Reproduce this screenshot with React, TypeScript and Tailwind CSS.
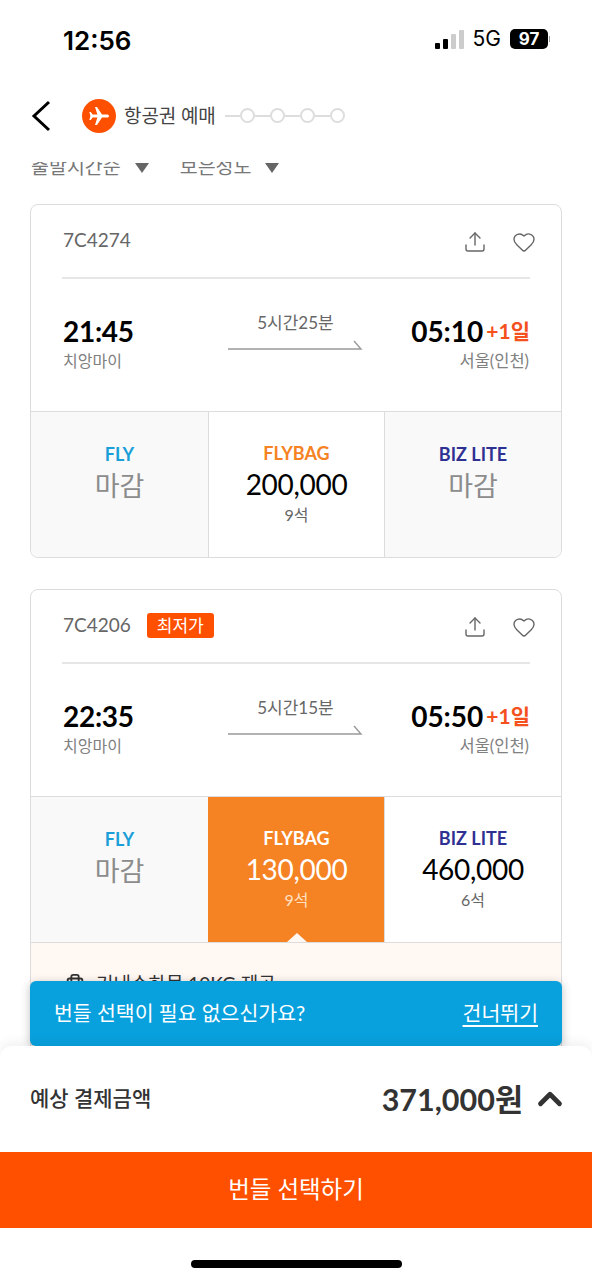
/**
 * Flight bundle selection screen.
 */

import { ChevronUp, Upload, Heart, Luggage } from 'lucide-react'

const FONT = 'font-[Lato,"Noto_Sans_CJK_KR",sans-serif]'

interface Fare {
  name: string
  nameColor: string
  price?: string
  seats?: string
  selected?: boolean
}

interface FlightCardProps {
  code: string
  lowest?: boolean
  depart: string
  arrive: string
  duration: string
  fares: Fare[]
  children?: React.ReactNode
}

function FareCell({ fare, divider }: { fare: Fare; divider: boolean }) {
  const closed = !fare.price
  return (
    <div
      className={`relative flex h-[145px] flex-col items-center ${divider ? 'border-l' : ''} ${
        fare.selected ? 'border-[#f58223] bg-[#f58223]' : closed ? 'border-[#dcdcdc] bg-[#f9f9f9]' : 'border-[#dcdcdc] bg-white'
      }`}
    >
      <div
        className={`text-[18px] leading-[24px] font-bold ${closed ? 'mt-[30px]' : 'mt-[29px]'}`}
        style={{ color: fare.selected ? '#ffffff' : fare.nameColor }}
      >
        {fare.name}
      </div>
      {closed ? (
        <div className="mt-[2px] text-[27px] leading-[36px] text-[#8c8c8c]">마감</div>
      ) : (
        <>
          <div className={`mt-[1px] text-[28px] leading-[36px] tracking-[-0.3px] ${fare.selected ? 'text-white' : 'text-black'}`}>
            {fare.price}
          </div>
          <div className={`mt-[3px] text-[16px] leading-[20px] ${fare.selected ? 'text-[#ffe0c4]' : 'text-[#666666]'}`}>
            {fare.seats}
          </div>
        </>
      )}
      {fare.selected && (
        <div className="absolute bottom-0 left-1/2 h-0 w-0 -translate-x-1/2 border-x-[10px] border-b-[9px] border-x-transparent border-b-[#fff8f3]" />
      )}
    </div>
  )
}

function FlightCard({ code, lowest, depart, arrive, duration, fares, children }: FlightCardProps) {
  return (
    <div className="mx-[30px] overflow-hidden rounded-[8px] border border-[#dcdcdc] bg-white">
      <div className="px-[31px]">
        <div className="flex h-[74px] justify-between border-b-2 border-[#e6e6e6] pt-[21px]">
          <div className="flex h-[28px] items-center gap-[16px] pl-[1px]">
            <span className="text-[19px] text-[#666666]">{code}</span>
            {lowest && (
              <span className="rounded-[3px] bg-[#ff5000] px-[10px] text-[17px] leading-[25px] text-white">최저가</span>
            )}
          </div>
          <div className="-mr-[6px] flex gap-[25px] pt-[4px] text-[#666666]">
            <Upload size={24} strokeWidth={1.4} />
            <Heart size={24} strokeWidth={1.4} />
          </div>
        </div>
        <div className="flex h-[132px] justify-between pt-[35px]">
          <div className="pl-[1px]">
            <div className="text-[28px] leading-[34px] font-bold tracking-[-0.3px] text-black">{depart}</div>
            <div className="mt-[3px] text-[16px] leading-[20px] text-[#808080]">치앙마이</div>
          </div>
          <div className="ml-[46px] flex flex-col items-center">
            <div className="-mt-[2px] text-[17px] leading-[22px] text-[#666666]">{duration}</div>
            <svg className="mt-[4px]" width="136" height="14" viewBox="0 0 136 14" fill="none" stroke="#999999" strokeWidth="1.4">
              <path d="M1 11H134L127 3" />
            </svg>
          </div>
          <div className="flex flex-col items-end">
            <div className="flex items-center gap-[3px] text-[28px] leading-[34px] font-bold text-black">
              {arrive}
              <span className="text-[21px] text-[#f4511e]">+1일</span>
            </div>
            <div className="mt-[3px] mr-[1px] text-[16.5px] leading-[20px] text-[#808080]">서울(인천)</div>
          </div>
        </div>
      </div>
      <div className="grid grid-cols-[177px_176px_1fr] border-t border-[#dcdcdc]">
        {fares.map((fare, i) => (
          <FareCell key={fare.name} fare={fare} divider={i > 0} />
        ))}
      </div>
      {children}
    </div>
  )
}

export default function App() {
  return (
    <div className={`relative flex h-[1280px] w-[592px] flex-col overflow-hidden bg-white ${FONT}`}>
      {/* status bar */}
      <div className="flex h-[78px] shrink-0 items-center justify-between pr-[42px] pl-[63px] font-['Inter',sans-serif]">
        <span className="mt-[2px] text-[26px] font-semibold text-black">12:56</span>
        <div className="flex items-center gap-[9px]">
          <div className="flex items-end gap-[3px]">
            <span className="h-[6px] w-[5px] rounded-[1px] bg-black" />
            <span className="h-[10px] w-[5px] rounded-[1px] bg-black" />
            <span className="h-[15px] w-[5px] rounded-[1px] bg-[#cccccc]" />
            <span className="h-[19px] w-[5px] rounded-[1px] bg-[#cccccc]" />
          </div>
          <span className="text-[21px] text-black">5G</span>
          <div className="flex items-center gap-[1px]">
            <span className="h-[20px] w-[38px] rounded-[5px] bg-black text-center text-[17px] leading-[20px] font-bold text-white">97</span>
            <span className="h-[6px] w-[1px] bg-[#999999]" />
          </div>
        </div>
      </div>

      {/* header */}
      <div className="flex h-[84px] shrink-0 items-start pl-[31px]">
        <svg className="mt-[22px]" width="20" height="32" viewBox="0 0 20 32" fill="none" stroke="black" strokeWidth="3">
          <path d="M18 2L3 16L18 30" />
        </svg>
        <div className="mt-[21px] ml-[31px] flex h-[34px] w-[34px] items-center justify-center rounded-full bg-[#ff5000]">
          <svg width="24" height="24" viewBox="0 0 24 24" fill="white">
            <path d="M22 12c0-1-1-1.6-2.4-1.6H15L10 3H8l2.4 7.4H5.6L3.8 8H2.4l1 4-1 4h1.4l1.8-2.4h4.8L8 21h2l5-7.4h4.6C21 13.6 22 13 22 12z" />
          </svg>
        </div>
        <span className="mt-[25px] ml-[8px] text-[19px] leading-[26px] tracking-[-0.1px] text-[#444444]">항공권 예매</span>
        <div className="mt-[30px] ml-[9px] flex items-center">
          {[0, 1, 2, 3].map((i) => (
            <div key={i} className="flex items-center">
              <span className="h-[2px] w-[15px] bg-[#dddddd]" />
              <span className="h-[15px] w-[15px] rounded-full border-2 border-[#dddddd]" />
            </div>
          ))}
        </div>
      </div>

      {/* scroll area, filter row is cut by the header */}
      <div className="min-h-0 flex-1 overflow-hidden">
        <div className="-mt-[7px] flex h-[49px] items-start pl-[31px] text-[19.5px] leading-[24px] text-[#777777]">
          <span>출발시간순</span>
          <span className="mt-[8px] ml-[14px] h-0 w-0 border-x-[7.5px] border-t-[10px] border-x-transparent border-t-[#666666]" />
          <span className="ml-[31px]">보은성도</span>
          <span className="mt-[8px] ml-[14px] h-0 w-0 border-x-[7.5px] border-t-[10px] border-x-transparent border-t-[#666666]" />
        </div>

        <div className="flex flex-col gap-[31px]">
          <FlightCard
            code="7C4274"
            depart="21:45"
            arrive="05:10"
            duration="5시간25분"
            fares={[
              { name: 'FLY', nameColor: '#1a9fd8' },
              { name: 'FLYBAG', nameColor: '#f58223', price: '200,000', seats: '9석' },
              { name: 'BIZ LITE', nameColor: '#2e3192' },
            ]}
          />
          <FlightCard
            code="7C4206"
            lowest
            depart="22:35"
            arrive="05:50"
            duration="5시간15분"
            fares={[
              { name: 'FLY', nameColor: '#1a9fd8' },
              { name: 'FLYBAG', nameColor: '#f58223', price: '130,000', seats: '9석', selected: true },
              { name: 'BIZ LITE', nameColor: '#2e3192', price: '460,000', seats: '6석' },
            ]}
          >
            <div className="h-[300px] border-t border-[#dcdcdc] bg-[#fff8f3] px-[33px] pt-[29px]">
              <div className="flex items-center gap-[10px] text-[19px] leading-[24px] text-[#333333]">
                <Luggage size={22} />
                기내수하물 10KG 제공
              </div>
            </div>
          </FlightCard>
        </div>
      </div>

      {/* skip banner */}
      <div className="absolute top-[981px] left-[30px] flex h-[65px] w-[532px] items-center justify-between rounded-[6px] bg-[#08a1de] pr-[24px] pl-[24px] text-[20.5px] text-white shadow-[0_2px_10px_rgba(0,0,0,0.25)]">
        <span>번들 선택이 필요 없으신가요?</span>
        <span className="underline underline-offset-[4px]">건너뛰기</span>
      </div>

      {/* bottom sheet */}
      <div className="absolute top-[1046px] left-0 flex h-[234px] w-[592px] flex-col rounded-t-[12px] bg-white shadow-[0_-4px_12px_rgba(0,0,0,0.06)]">
        <div className="flex h-[106px] items-start justify-between pr-[23px] pl-[30px]">
          <span className="mt-[38px] text-[21px] leading-[28px] font-medium text-[#333333]">예상 결제금액</span>
          <div className="mt-[31px] flex items-center gap-[8px]">
            <span className="text-[30.5px] leading-[44px] font-bold text-[#333333]">371,000원</span>
            <ChevronUp size={38} strokeWidth={3} className="text-[#333333]" />
          </div>
        </div>
        <div className="flex h-[76px] items-center justify-center bg-[#ff5000] text-[23.5px] text-white">번들 선택하기</div>
        <div className="flex flex-1 justify-center pt-[32px]">
          <span className="h-[8px] w-[211px] rounded-full bg-black" />
        </div>
      </div>
    </div>
  )
}
